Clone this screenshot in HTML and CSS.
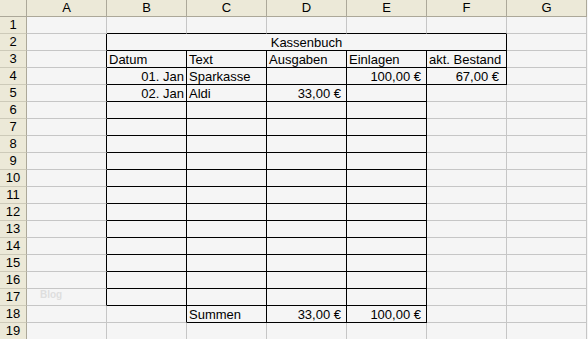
FILE: index.html
```html
<!DOCTYPE html>
<html lang="de">

<head>
    <meta charset="UTF-8">
    <title>Kassenbuch</title>
    <link rel="stylesheet" href="styles.css">
</head>

<body>
    <table class="sheet">
        <thead>
            <tr>
                <th class="corner"></th>
                <th>A</th>
                <th>B</th>
                <th>C</th>
                <th>D</th>
                <th>E</th>
                <th>F</th>
                <th class="last">G</th>
            </tr>
        </thead>
        <tbody>
            <tr>
                <th>1</th>
                <td></td>
                <td class="eb"></td><td class="eb"></td><td class="eb"></td><td class="eb"></td><td class="eb"></td>
                <td></td>
            </tr>
            <tr>
                <th>2</th>
                <td class="er"></td>
                <td class="box title" colspan="5">Kassenbuch</td>
                <td></td>
            </tr>
            <tr>
                <th>3</th>
                <td class="er"></td>
                <td class="box">Datum</td>
                <td class="box">Text</td>
                <td class="box">Ausgaben</td>
                <td class="box">Einlagen</td>
                <td class="box">akt. Bestand</td>
                <td></td>
            </tr>
            <tr>
                <th>4</th>
                <td class="er"></td>
                <td class="box num">01. Jan</td>
                <td class="box">Sparkasse</td>
                <td class="box"></td>
                <td class="box money">100,00 €</td>
                <td class="box money wide">67,00 €</td>
                <td></td>
            </tr>
            <tr>
                <th>5</th>
                <td class="er"></td>
                <td class="box num">02. Jan</td>
                <td class="box">Aldi</td>
                <td class="box money">33,00 €</td>
                <td class="box"></td>
                <td></td><td></td>
            </tr>
            <tr>
                <th>6</th>
                <td class="er"></td>
                <td class="box"></td><td class="box"></td><td class="box"></td><td class="box"></td>
                <td></td><td></td>
            </tr>
            <tr>
                <th>7</th>
                <td class="er"></td>
                <td class="box"></td><td class="box"></td><td class="box"></td><td class="box"></td>
                <td></td><td></td>
            </tr>
            <tr>
                <th>8</th>
                <td class="er"></td>
                <td class="box"></td><td class="box"></td><td class="box"></td><td class="box"></td>
                <td></td><td></td>
            </tr>
            <tr>
                <th>9</th>
                <td class="er"></td>
                <td class="box"></td><td class="box"></td><td class="box"></td><td class="box"></td>
                <td></td><td></td>
            </tr>
            <tr>
                <th>10</th>
                <td class="er"></td>
                <td class="box"></td><td class="box"></td><td class="box"></td><td class="box"></td>
                <td></td><td></td>
            </tr>
            <tr>
                <th>11</th>
                <td class="er"></td>
                <td class="box"></td><td class="box"></td><td class="box"></td><td class="box"></td>
                <td></td><td></td>
            </tr>
            <tr>
                <th>12</th>
                <td class="er"></td>
                <td class="box"></td><td class="box"></td><td class="box"></td><td class="box"></td>
                <td></td><td></td>
            </tr>
            <tr>
                <th>13</th>
                <td class="er"></td>
                <td class="box"></td><td class="box"></td><td class="box"></td><td class="box"></td>
                <td></td><td></td>
            </tr>
            <tr>
                <th>14</th>
                <td class="er"></td>
                <td class="box"></td><td class="box"></td><td class="box"></td><td class="box"></td>
                <td></td><td></td>
            </tr>
            <tr>
                <th>15</th>
                <td class="er"></td>
                <td class="box"></td><td class="box"></td><td class="box"></td><td class="box"></td>
                <td></td><td></td>
            </tr>
            <tr>
                <th>16</th>
                <td class="er"></td>
                <td class="box"></td><td class="box"></td><td class="box"></td><td class="box"></td>
                <td></td><td></td>
            </tr>
            <tr>
                <th>17</th>
                <td class="er"><span class="watermark">Blog</span></td>
                <td class="box"></td><td class="box"></td><td class="box"></td><td class="box"></td>
                <td></td><td></td>
            </tr>
            <tr>
                <th>18</th>
                <td></td>
                <td class="er"></td>
                <td class="box">Summen</td>
                <td class="box money">33,00 €</td>
                <td class="box money">100,00 €</td>
                <td></td><td></td>
            </tr>
            <tr>
                <th>19</th>
                <td></td><td></td><td></td><td></td><td></td><td></td><td></td>
            </tr>
        </tbody>
    </table>
</body>

</html>
```

FILE: styles.css
```css
body {
    margin: 0;
    background-color: #f5f5f5;
    font-family: "Liberation Sans", Arial, sans-serif;
    font-size: 13px;
    color: #000;
    overflow: hidden;
}

.sheet {
    border-collapse: separate;
    border-spacing: 0;
    table-layout: fixed;
    width: 587px;
}

.sheet th,
.sheet td {
    box-sizing: border-box;
    padding: 0;
    border: 0;
    border-right: 1px solid #c6c6c6;
    border-bottom: 1px solid #c6c6c6;
    white-space: nowrap;
    overflow: hidden;
}

/* column + row headers */
.sheet thead th {
    width: 80px;
    height: 17px;
    line-height: 16px;
    background-color: #ece9d8;
    border-right-color: #aca899;
    border-bottom-color: #aca899;
    font-weight: normal;
    text-align: center;
}

.sheet thead th.corner {
    width: 27px;
}

.sheet thead th.last {
    width: 80px;
}

.sheet tbody th {
    height: 17px;
    line-height: 16px;
    background-color: #ece9d8;
    border-right-color: #aca899;
    border-bottom-color: #cdcab9;
    font-weight: normal;
    text-align: center;
}

.sheet td {
    height: 17px;
    padding: 1px 2px 0 2px;
    line-height: 15px;
    background-color: #f5f5f5;
    text-align: left;
}

/* black cell borders */
.sheet td.box {
    border-right-color: #000;
    border-bottom-color: #000;
}

.sheet td.er {
    border-right-color: #000;
}

.sheet td.eb {
    border-bottom-color: #000;
}

.title {
    text-align: center !important;
}

.num {
    text-align: right !important;
}

.money {
    text-align: right !important;
    padding-right: 5px !important;
}

.money.wide {
    padding-right: 7px !important;
}

.watermark {
    display: inline-block;
    margin-left: 11px;
    font-size: 10px;
    font-weight: bold;
    line-height: 10px;
    vertical-align: top;
    color: #dedede;
}
```
